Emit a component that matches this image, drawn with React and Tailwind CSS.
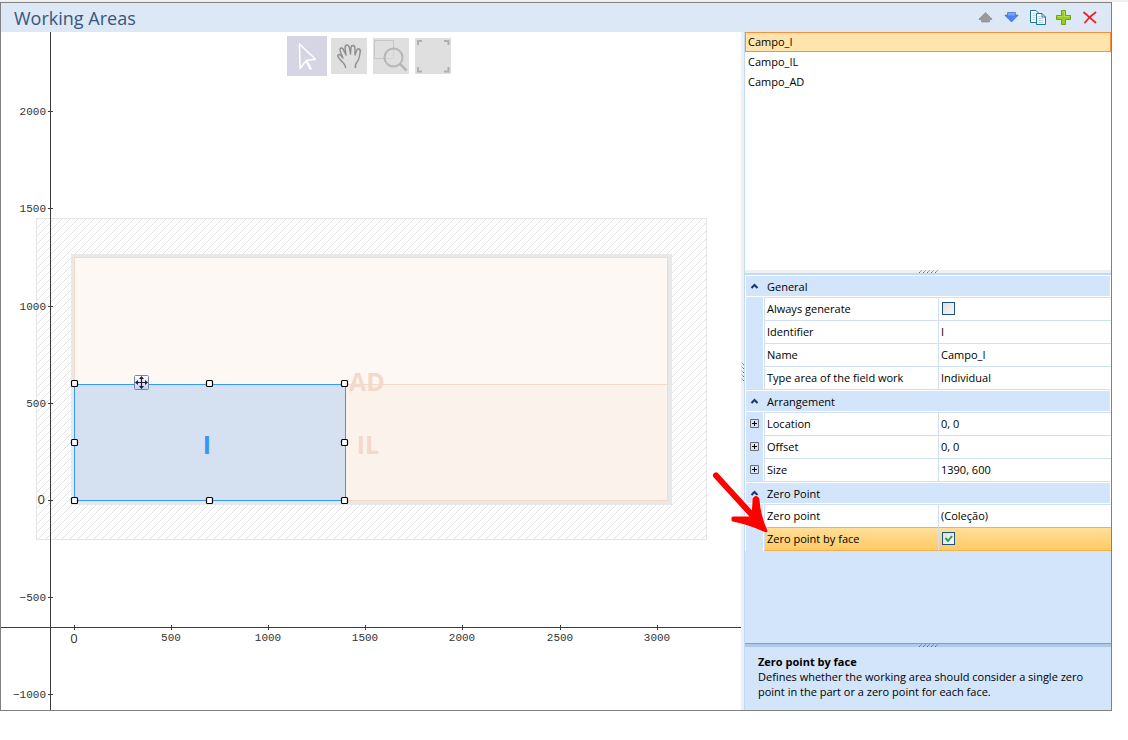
import { useState } from 'react';

const areas = ['Campo_I', 'Campo_IL', 'Campo_AD'];

const groups = [
  {
    title: 'General',
    rows: [
      { id: 'always', label: 'Always generate', type: 'check', value: false },
      { id: 'identifier', label: 'Identifier', value: 'I' },
      { id: 'name', label: 'Name', value: 'Campo_I' },
      { id: 'kind', label: 'Type area of the field work', value: 'Individual' },
    ],
  },
  {
    title: 'Arrangement',
    rows: [
      { id: 'location', label: 'Location', value: '0, 0', expandable: true },
      { id: 'offset', label: 'Offset', value: '0, 0', expandable: true },
      { id: 'size', label: 'Size', value: '1390, 600', expandable: true },
    ],
  },
  {
    title: 'Zero Point',
    rows: [
      { id: 'zero', label: 'Zero point', value: '(Coleção)' },
      { id: 'zeroByFace', label: 'Zero point by face', type: 'check', value: true, active: true },
    ],
  },
];

const xTicks = [
  { x: 73, label: '0' },
  { x: 170, label: '500' },
  { x: 267, label: '1000' },
  { x: 364, label: '1500' },
  { x: 461, label: '2000' },
  { x: 559, label: '2500' },
  { x: 656, label: '3000' },
];

const yTicks = [
  { y: 79, label: '2000' },
  { y: 176, label: '1500' },
  { y: 274, label: '1000' },
  { y: 371, label: '500' },
  { y: 468, label: '0' },
  { y: 565, label: '−500' },
  { y: 662, label: '−1000' },
];

const handles = [
  [73, 351], [208, 351], [343, 351],
  [73, 410], [343, 410],
  [73, 468], [208, 468], [343, 468],
];

const Canvas = () => (
  <svg className="block h-full w-full" shapeRendering="crispEdges">
    <defs>
      <pattern id="hatch" width="8" height="8" patternUnits="userSpaceOnUse">
        <path d="M-1 9L9 -1M-1 1L1 -1M7 9L9 7" stroke="#e0e0e0" strokeWidth="1" shapeRendering="auto" />
      </pattern>
      <linearGradient id="moveBg" x1="0" y1="0" x2="0" y2="1">
        <stop offset="0" stopColor="#fff" />
        <stop offset="1" stopColor="#c3cff0" />
      </linearGradient>
    </defs>

    {/* machine limits, part and work areas */}
    <rect x="35.5" y="186.5" width="670" height="321" fill="url(#hatch)" stroke="#e6e6e6" />
    <rect x="70" y="222" width="601" height="251" fill="#e8e8e8" />
    <rect x="73.5" y="225.5" width="593" height="243" fill="#fdf8f4" stroke="#f2d9ca" />
    <rect x="73.5" y="352.5" width="593" height="116" fill="#fbf2ec" stroke="#f4d8c8" />
    <rect x="73.5" y="352.5" width="271" height="116" fill="#d5e1f0" stroke="#3399ff" />
    <g fontFamily="Open Sans, sans-serif" fontWeight="700" fontSize="25" textAnchor="middle">
      <text x="366" y="359" fill="#f4d9cb">AD</text>
      <text x="367" y="422" fill="#f4d9cb">IL</text>
      <text x="206" y="422" fill="#3a94f5">I</text>
    </g>

    {/* axes */}
    <g fill="#3c3c3c">
      <rect x="49" y="0" width="1" height="100%" />
      <rect x="0" y="595" width="100%" height="1" />
      {yTicks.map((t) => <rect key={t.label} x="47" y={t.y} width="5" height="1" />)}
      {xTicks.map((t) => <rect key={t.label} x={t.x} y="593" width="1" height="5" />)}
    </g>
    <g fill="#333" fontFamily="Liberation Mono, monospace" fontSize="11">
      {yTicks.map((t) => (
        <text
          key={t.label}
          x={t.label === '0' ? 44 : 45}
          y={t.y + 4}
          textAnchor="end"
          className={t.label === '0' ? 'font-["Open_Sans",sans-serif] text-[13px]' : ''}
        >
          {t.label}
        </text>
      ))}
      {xTicks.map((t) => (
        <text
          key={t.label}
          x={t.x}
          y={t.label === '0' ? 611 : 609}
          textAnchor="middle"
          className={t.label === '0' ? 'font-["Open_Sans",sans-serif] text-[13px]' : ''}
        >
          {t.label}
        </text>
      ))}
    </g>

    {/* selection */}
    <g shapeRendering="auto">
      {handles.map(([x, y]) => (
        <rect key={`${x}-${y}`} x={x - 2.5} y={y - 2.5} width="6" height="6" rx="1" fill="#fff" stroke="#000" strokeWidth="1.2" />
      ))}
      <rect x="133.5" y="343.5" width="14" height="14" rx="1" fill="url(#moveBg)" stroke="#7b86a0" />
      <path d="M140.500 345.500v10M135.500 350.500h10" stroke="#1b2230" strokeWidth="1.200" />
      <path d="M140.500 344l2.500 3h-5zM140.500 357l2.500 -3h-5zM134 350.500l3 -2.500v5zM147 350.500l-3 -2.500v5z" fill="#1b2230" />
    </g>
  </svg>
);

const Tools = () => (
  <div className="absolute inset-x-0 top-1 flex items-center justify-center gap-[6px] pr-1">
    <button type="button" aria-label="Select" className="-mr-[2px] flex size-10 items-center justify-center bg-[#d5d5e4]">
      <svg width="40" height="40" fill="none" stroke="#fff" strokeWidth="1.5">
        <path d="M12.500 8L13 32.500L19.300 24.500L28.500 23.300Z" strokeLinejoin="round" />
        <path d="M19.500 25l4.500 8.500" strokeWidth="2.500" />
      </svg>
    </button>
    <button type="button" aria-label="Pan" className="size-9 bg-[#dfdfdf]">
      <svg width="36" height="36" fill="none" stroke="#8e8e8e" strokeWidth="1.400" strokeLinecap="round" strokeLinejoin="round">
        <path d="M14.500 29.500C14.500 26 11 24 9 21.500C7.500 19.500 6 18 7 17C8.500 15.500 10.500 18 12 20L9.500 14C8.500 11 9 10 10.500 10C12 10 12.500 11.500 13 13L15 17L14 10C14 8 14.500 7 16 7C17.500 7 18 8 18.500 10L19.500 16L20 10C20 8 21 7.500 22 7.500C23.500 7.500 24 9 24 11L24 17L25.500 13C26 11 27 10.500 28 11C29.500 11.500 29.500 13 29 15C28.500 19 28 22 26 24C24.500 26 24 28 24.500 29.500" />
      </svg>
    </button>
    <button type="button" aria-label="Zoom window" className="size-9 bg-[#dfdfdf]">
      <svg width="36" height="36" fill="none">
        <path d="M1.500 2.500H20.500V20.500H1.500Z" stroke="#c6c6c6" />
        <circle cx="20.500" cy="19.500" r="9" fill="#dfdfdf" fillOpacity=".5" stroke="#b5b5b5" strokeWidth="2" />
        <path d="M27 26l6.500 6.500" stroke="#b5b5b5" strokeWidth="2.500" />
      </svg>
    </button>
    <button type="button" aria-label="Fit" className="size-9 bg-[#dfdfdf]">
      <svg width="36" height="36" fill="none" stroke="#b0b0b0" strokeWidth="2">
        <path d="M3 7V3H7M29 3h4.500V7M33.500 29v4.500H29M7 33.500H3V29" />
      </svg>
    </button>
  </div>
);

const Actions = () => (
  <div className="flex items-center gap-[10px] pr-[13px]">
    <button type="button" aria-label="Move up">
      <svg className="block size-4" viewBox="0 0 16 16">
        <path d="M7.500 2.500L14 9V9.500H11.500V12H3.500V9.500H1V9z" fill="#9a9a9a" stroke="#868686" strokeWidth=".6" />
      </svg>
    </button>
    <button type="button" aria-label="Move down">
      <svg className="block size-4" viewBox="0 0 16 16">
        <path d="M3.500 2.500h8V5H14V5.500L7.500 12L1 5.500V5H3.500z" fill="#4f83ee" stroke="#3565d8" strokeWidth=".6" />
        <path d="M4 3h7v2.500h-7z" fill="#79a3f5" />
      </svg>
    </button>
    <button type="button" aria-label="Duplicate">
      <svg className="block size-4" viewBox="0 0 16 16" fill="#fff" stroke="#1478a0" strokeWidth="1">
        <path d="M.5 .5H6L9.500 4V12.500H.5z" />
        <path d="M6.500 3.500h5.500l3.500 3.500V14.500H6.500z" />
        <path d="M12 3.500V7h3.500" fill="none" />
        <path d="M2.500 3.500h3M2.500 5.500h3M2.500 7.500h3M2.500 9.500h3M8.500 6.500h2M8.500 8.500h5M8.500 10.500h5M8.500 12.500h5" stroke="#b4d0ea" />
      </svg>
    </button>
    <button type="button" aria-label="Add">
      <svg className="block size-4" viewBox="0 0 16 16">
        <path d="M5.500 .5h4v5h5v4h-5v5h-4v-5h-5v-4h5z" fill="#98cd22" stroke="#6fa30c" />
        <path d="M6.500 1.500h2v5h5M1.500 6.500h5" fill="none" stroke="#b9e052" />
      </svg>
    </button>
    <button type="button" aria-label="Delete">
      <svg className="block size-4" viewBox="0 0 16 16" fill="none" stroke="#f01d24" strokeLinecap="round">
        <path d="M2 2.500c3 2.500 8 7 11.500 10" strokeWidth="1.800" />
        <path d="M13.500 2.500C9 5.500 6 8.500 3 12.500" strokeWidth="1.800" />
      </svg>
    </button>
  </div>
);

const Grip = ({ className }) => (
  <svg className={className} width="20" height="3" stroke="#2f76cc">
    <path d="M1 3l3 -3M5 3l3 -3M9 3l3 -3M13 3l3 -3M17 3l3 -3" strokeDasharray="1.500 .5" />
  </svg>
);

const Check = ({ id, checked, onChange }) => (
  <span className="ml-[3px] grid size-[13px]">
    <input
      id={id}
      type="checkbox"
      checked={checked}
      onChange={onChange}
      className="col-start-1 row-start-1 size-[13px] appearance-none border border-[#1c5180] bg-linear-to-br from-[#dcdfe6] to-[#f7f8fa]"
    />
    {checked && (
      <svg className="pointer-events-none col-start-1 row-start-1" width="13" height="13" fill="none" stroke="#2fa03c" strokeWidth="2">
        <path d="M3.500 6L6 9L10 4" />
      </svg>
    )}
  </span>
);

const PropertyRow = ({ row }) => {
  const [value, setValue] = useState(row.value);
  const line = row.active ? 'border-b border-y-[#f3b34c]' : 'border-y-[#cfdff5]';
  const bg = row.active ? 'bg-linear-to-b from-[#ffdf98] to-[#ffca63]' : 'bg-white';

  return (
    <tr className={row.active ? 'h-6' : 'h-[23px]'}>
      <td className="border-r border-white bg-[#d3e5fb] p-0">
        {row.expandable && (
          <button type="button" aria-label={`Expand ${row.label}`} className="mx-auto block">
            <svg className="block" width="9" height="9" fill="none" stroke="#6b6b6b">
              <path d="M.5 .5h8v8h-8z" />
              <path d="M2 4.500h5M4.500 2v5" stroke="#000" />
            </svg>
          </button>
        )}
      </td>
      <th scope="row" className={`border-t border-l border-l-[#cfdff5] p-0 pb-[2px] pl-[2px] text-left font-normal ${line} ${bg}`}>
        <label htmlFor={row.id}>{row.label}</label>
      </th>
      <td className={`border-t border-l border-l-[#cfdff5] p-0 pb-[2px] ${line} ${bg}`}>
        {row.type === 'check' ? (
          <Check id={row.id} checked={value} onChange={(e) => setValue(e.target.checked)} />
        ) : (
          <input
            id={row.id}
            type="text"
            value={value}
            onChange={(e) => setValue(e.target.value)}
            className="block w-full bg-transparent pl-[2px] outline-none"
          />
        )}
      </td>
    </tr>
  );
};

const PropertyGrid = () => (
  <div className="relative h-[370px] border-t-2 border-[#c0dafa] bg-[#d3e5fb]">
    <table className="w-full table-fixed border-separate border-spacing-0 border-l border-white">
      <colgroup>
        <col className="w-[18px]" />
        <col className="w-[174px]" />
        <col />
      </colgroup>
      {groups.map((g, i) => (
        <tbody key={g.title}>
          <tr>
            <th
              colSpan={3}
              scope="rowgroup"
              className={`border-y border-r border-white bg-[#d3e5fb] p-0 text-left font-normal ${i > 0 ? 'border-t-[#cfdff5]' : ''}`}
            >
              <button type="button" className={`flex w-full items-center ${i > 0 ? 'h-[21px] border-t border-white' : 'h-5'}`}>
                <svg className="mr-2 ml-1" width="9" height="6" fill="none" stroke="#17366f" strokeWidth="2">
                  <path d="M1.500 5L4.500 2L7.500 5" />
                </svg>
                {g.title}
              </button>
            </th>
          </tr>
          {g.rows.map((r) => <PropertyRow key={r.id} row={r} />)}
        </tbody>
      ))}
    </table>

    {/* callout pointing at the active property */}
    <svg className="pointer-events-none absolute top-[197px] -left-[34px]" width="60" height="64" fill="none" strokeLinecap="round" strokeLinejoin="round">
      <path d="M5 3.500L42 44" stroke="#fff" strokeWidth="8" />
      <path d="M22 46L39 46L42 42Q43 34 43 27Q45 24 47 27Q48 44 55 59Q38 51 22 48Z" stroke="#fff" strokeWidth="4" />
      <path d="M5 3.500L42 44" stroke="#fe0000" strokeWidth="6" />
      <path d="M22 46L39 46L42 42Q43 34 43 27Q45 24 47 27Q48 44 55 59Q38 51 22 48Z" fill="#fe0000" stroke="#fe0000" strokeWidth="3" />
    </svg>
  </div>
);

export default function App() {
  const [selected, setSelected] = useState('Campo_I');

  return (
    <div className="bg-white font-['Open_Sans','Noto_Sans',sans-serif] text-[11px] leading-[15px] text-black">
      <div className="h-[2px] bg-[#f0f0f0]" />
      <main className="mr-4 border border-[#808080]">
        <header className="flex h-[29px] items-center justify-between bg-[#dce8f6]">
          <h1 className="pl-[13px] text-[18px] leading-6 text-[#39567c]">Working Areas</h1>
          <Actions />
        </header>

        <div className="flex">
          <section className="relative min-w-0 flex-1" aria-label="Work area preview">
            <Canvas />
            <Tools />
          </section>

          <div className="flex w-[3px] items-center justify-center overflow-hidden bg-[#f0f0f0]">
            <Grip className="shrink-0 rotate-90" />
          </div>

          <aside className="w-[367px] border-l border-[#c0dafa]">
            <ul className="h-[238px]">
              {areas.map((a) => (
                <li key={a}>
                  <button
                    type="button"
                    onClick={() => setSelected(a)}
                    className={`block h-5 w-full border pb-[2px] pl-[2px] text-left ${a === selected ? 'border-[#f98f3c] bg-[#ffe5ab]' : 'border-transparent'}`}
                  >
                    {a}
                  </button>
                </li>
              ))}
            </ul>
            <div className="flex h-[3px] justify-center bg-[#f0f0f0]">
              <Grip />
            </div>
            <PropertyGrid />
            <div className="flex h-1 justify-center border-t border-[#7c9fd3] bg-[#b1c9e8]">
              <Grip />
            </div>
            <div className="h-[63px] bg-[#d3e5fb] pt-[7px] pr-5 pl-[13px]">
              <h2 className="font-bold">Zero point by face</h2>
              <p>Defines whether the working area should consider a single zero point in the part or a zero point for each face.</p>
            </div>
          </aside>
        </div>
      </main>
    </div>
  );
}
